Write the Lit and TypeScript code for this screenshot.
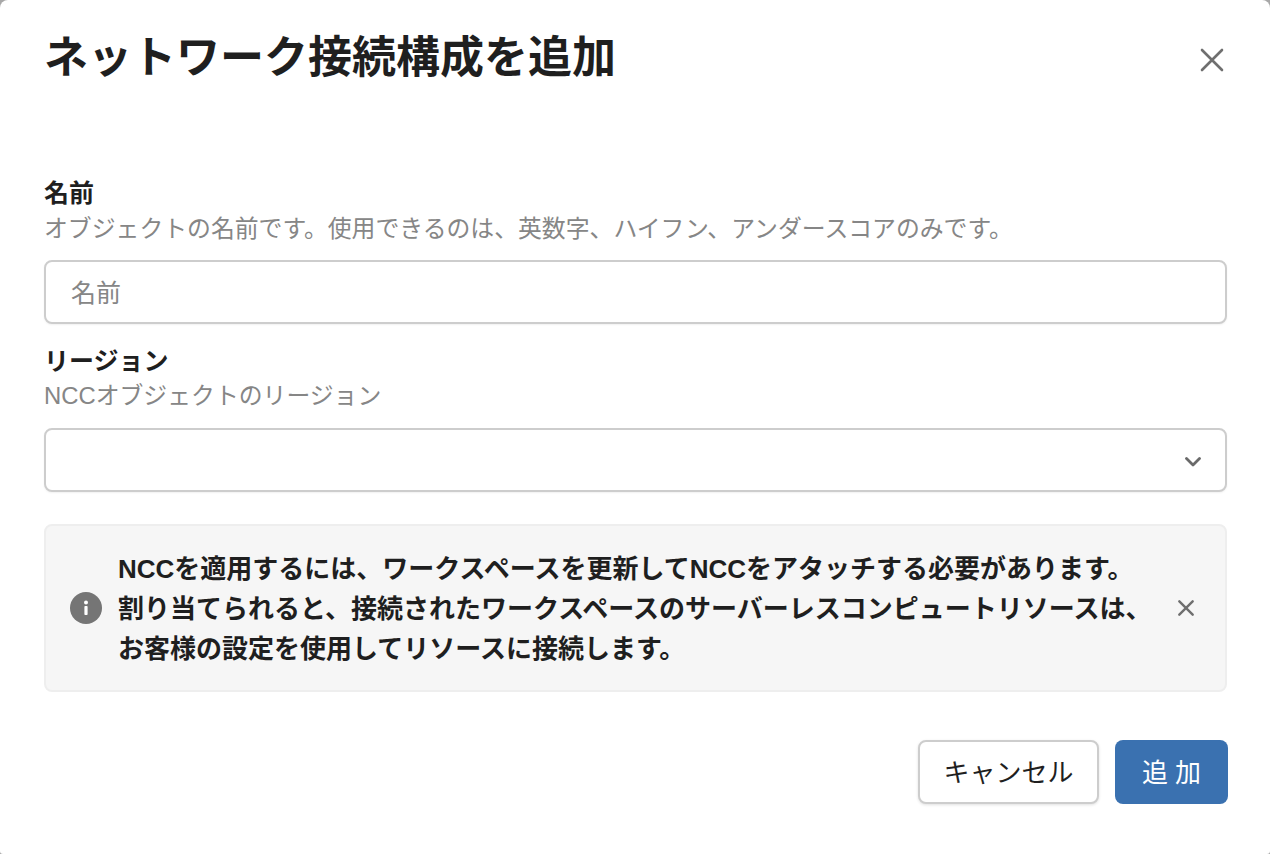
import { LitElement, html, css } from "lit";
import { customElement } from "lit/decorators.js";

const closeIcon = (size: number, stroke: number) => html`<svg width=${size} height=${size} viewBox="0 0 24 24" fill="none" stroke="#6f6f6f" stroke-width=${stroke} stroke-linecap="round"><path d="M2 2 L22 22 M22 2 L2 22"/></svg>`;

@customElement("app-root")
export class AppRoot extends LitElement {
  static styles = css`
    :host { display: block; width: 1270px; height: 854px; background: #a8a8a8; overflow: hidden;
      font-family: "Liberation Sans", "Noto Sans CJK JP", sans-serif; color: #1f1f1f; }
    * { box-sizing: border-box; }
    .dialog { width: 1270px; height: 854px; background: #fff; border-radius: 8px 8px 3px 3px; padding: 0 43px 0 44px; display: flex; flex-direction: column; }
    .head { height: 172px; display: flex; justify-content: space-between; align-items: flex-start; }
    h1 { margin: 0; font-size: 44px; line-height: 60px; padding-top: 28px; font-weight: 700; white-space: nowrap; }
    .x { margin-top: 48px; margin-right: 3px; display: flex; }
    .label { font-size: 25px; font-weight: 700; line-height: 38px; padding-top: 2px; margin-bottom: -2px; }
    .desc { font-size: 23.85px; line-height: 34px; color: #868686; font-weight: 400; white-space: nowrap; padding-top: 2px; margin-bottom: -2px; }
    .d2 { padding-top: 1px; margin-bottom: -1px; }
    .field { height: 64px; margin-top: 16px; border: 2px solid #cdcdcd; border-radius: 8px; background: #fff; display: flex; align-items: center; justify-content: space-between; padding: 0 24px 0 25px; box-shadow: 0 1px 2px rgba(0,0,0,.06); }
    .ph { font-size: 25px; color: #868686; margin-bottom: 2px; }
    .chev { margin-top: 4px; }
    .f2 { margin-top: 16px; }
    .alert { margin-top: 32px; height: 168px; background: #f6f6f6; border: 2px solid #eeeeee; border-radius: 8px; display: flex; align-items: center; padding: 0 28px 0 24px; }
    .info { width: 32px; height: 32px; flex: none; }
    .msg { flex: 1; margin-left: 16px; font-size: 26px; line-height: 40px; font-weight: 700; white-space: nowrap; color: #1f1f1f; padding-top: 2px; }
    .ax { display: flex; margin-right: 3px; }
    .actions { margin-top: 48px; margin-right: -1px; display: flex; justify-content: flex-end; gap: 16px; }
    .btn { height: 64px; border-radius: 8px; font-size: 26px; display: flex; align-items: center; justify-content: center; font-family: inherit; padding: 0 0 3px; }
    .cancel { width: 181px; border: 2px solid #cdcdcd; background: #fff; color: #1f1f1f; box-shadow: 0 1px 3px rgba(0,0,0,.12); }
    .ok { width: 113px; border: none; background: #3a71b0; color: #fff; letter-spacing: 7px; padding-left: 7px; }
  `;

  render() {
    return html`<div class="dialog">
      <div class="head"><h1>ネットワーク接続構成を追加</h1><span class="x">${closeIcon(24, 2.6)}</span></div>
      <div class="label">名前</div>
      <div class="desc">オブジェクトの名前です。使用できるのは、英数字、ハイフン、アンダースコアのみです。</div>
      <div class="field"><span class="ph">名前</span></div>
      <div class="label f2">リージョン</div>
      <div class="desc d2">NCCオブジェクトのリージョン</div>
      <div class="field"><span></span><svg class="chev" width="16" height="10" viewBox="0 0 16 10" fill="none" stroke="#6a6a6a" stroke-width="2.8" stroke-linecap="round" stroke-linejoin="round"><path d="M1.5 1.5 L8 8 L14.5 1.5"/></svg></div>
      <div class="alert">
        <svg class="info" viewBox="0 0 32 32"><circle cx="16" cy="16" r="16" fill="#757575"/><circle cx="16" cy="10.5" r="2" fill="#fff"/><rect x="14.4" y="14" width="3.2" height="9" rx="0.8" fill="#fff"/></svg>
        <div class="msg">NCCを適用するには、ワークスペースを更新してNCCをアタッチする必要があります。<br>割り当てられると、接続されたワークスペースのサーバーレスコンピュートリソースは、<br>お客様の設定を使用してリソースに接続します。</div>
        <span class="ax">${closeIcon(16, 3.6)}</span>
      </div>
      <div class="actions"><button class="btn cancel">キャンセル</button><button class="btn ok">追加</button></div>
    </div>`;
  }
}
